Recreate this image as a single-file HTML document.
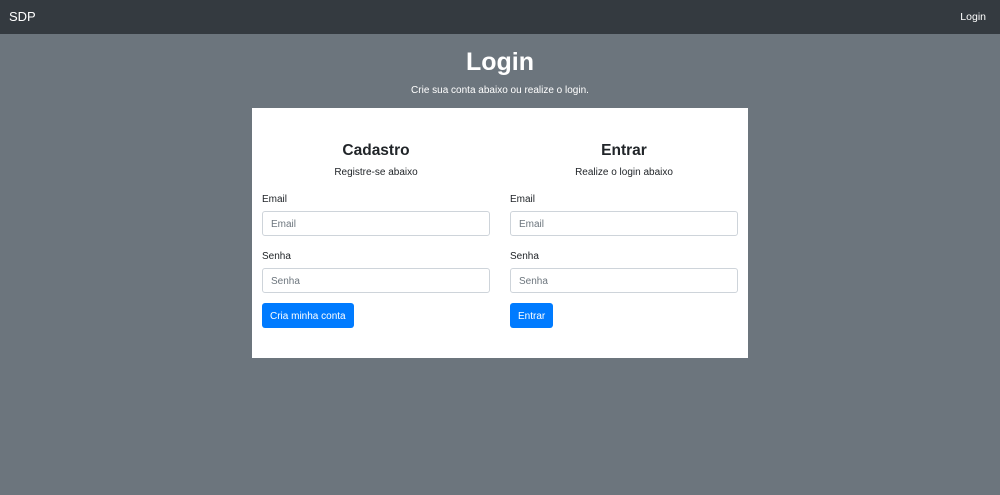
<!DOCTYPE html>
<html><head><meta charset="utf-8"><style>
*{box-sizing:border-box;margin:0;padding:0}
body{width:1000px;height:495px;background:#6c757d;font-family:"Liberation Sans",sans-serif;position:relative;overflow:hidden;color:#212529}
.nav{position:absolute;left:0;top:0;width:1000px;height:34px;background:#343a40}
.brand{position:absolute;left:9px;top:9px;color:#fff;font-size:13px}
.nl{position:absolute;right:14px;top:11px;color:#fff;font-size:10.5px}
h1{position:absolute;left:0;width:1000px;top:48px;text-align:center;color:#fff;font-size:25px;font-weight:bold}
.sub{position:absolute;left:0;width:1000px;top:85px;text-align:center;color:#fff;font-size:10px}
.card{position:absolute;left:252px;top:108px;width:496px;height:250px;background:#fff}
.col{position:absolute;top:0;width:228px}
.col h2{position:absolute;top:34px;width:228px;text-align:center;font-size:15.5px;font-weight:bold}
.col .s{position:absolute;top:59px;width:228px;text-align:center;font-size:10px}
.lab{position:absolute;font-size:10px;left:0}
.inp{position:absolute;left:0;width:228px;height:25px;border:1px solid #ced4da;border-radius:3px;font-size:10px;color:#6c757d;padding:7px 8px}
.btn{position:absolute;top:195px;left:0;height:25px;background:#007bff;color:#fff;font-size:10px;border-radius:3px;padding:8px 8px 0}
</style></head><body>
<div class="nav"><div class="brand">SDP</div><div class="nl">Login</div></div>
<h1>Login</h1>
<div class="sub">Crie sua conta abaixo ou realize o login.</div>
<div class="card">
<div class="col" style="left:10px">
<h2>Cadastro</h2><div class="s">Registre-se abaixo</div>
<div class="lab" style="top:86px">Email</div>
<div class="inp" style="top:103px">Email</div>
<div class="lab" style="top:143px">Senha</div>
<div class="inp" style="top:160px">Senha</div>
<div class="btn">Cria minha conta</div>
</div>
<div class="col" style="left:258px">
<h2>Entrar</h2><div class="s">Realize o login abaixo</div>
<div class="lab" style="top:86px">Email</div>
<div class="inp" style="top:103px">Email</div>
<div class="lab" style="top:143px">Senha</div>
<div class="inp" style="top:160px">Senha</div>
<div class="btn">Entrar</div>
</div>
</div>
</body></html>
